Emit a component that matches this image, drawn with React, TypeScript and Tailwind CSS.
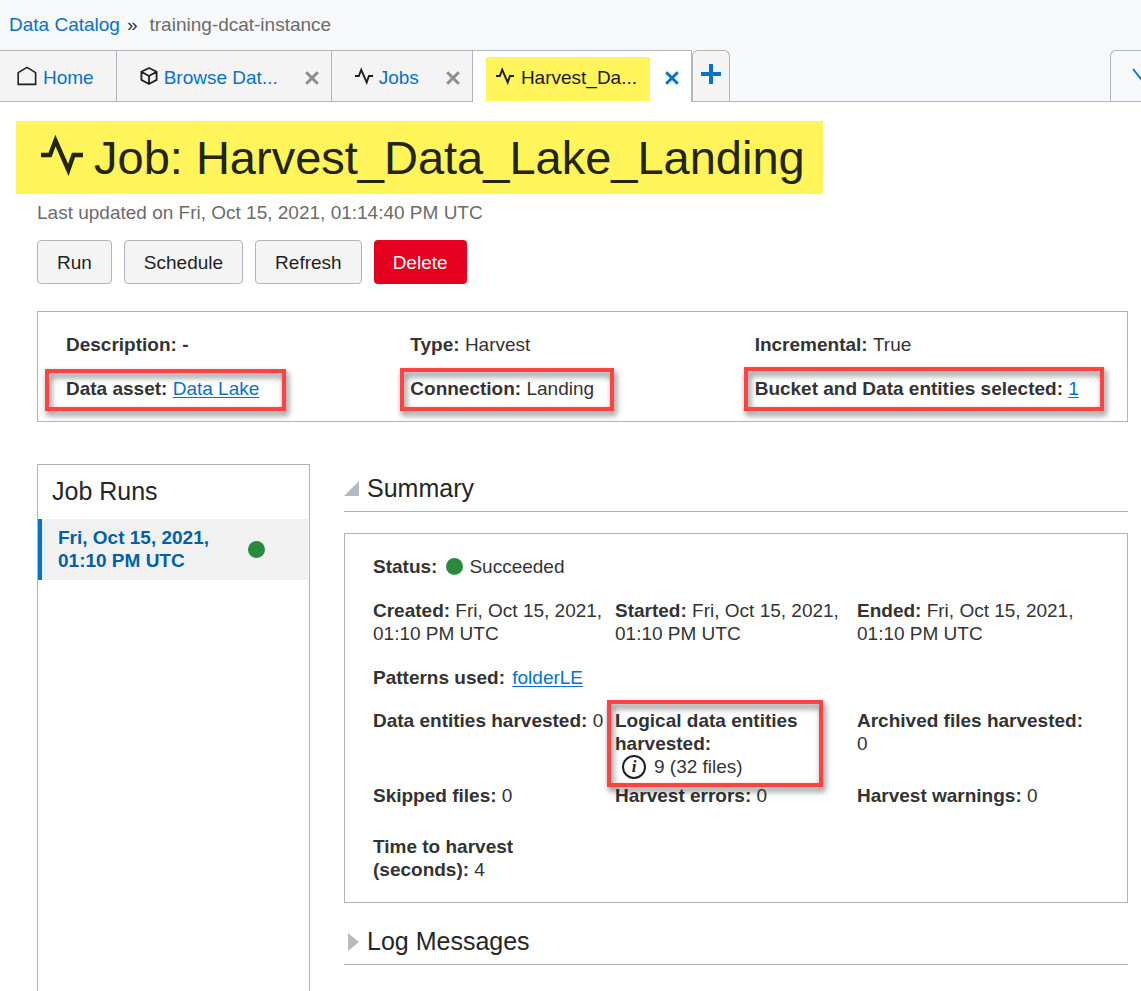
import type { ReactNode } from "react";

function PulseIcon({ className }: { className: string }) {
  return (
    <svg viewBox="0 0 42 42" className={className} fill="none" stroke="currentColor" strokeWidth="4.4" strokeMiterlimit="10" aria-hidden="true">
      <path d="M0 21H9L14.5 6.5L27.3 36L32.5 21H42" />
    </svg>
  );
}

function HomeIcon() {
  return (
    <svg viewBox="0 0 20 20" className="size-5 shrink-0 text-[#1f1f1f]" fill="none" stroke="currentColor" strokeWidth="1.6" aria-hidden="true">
      <path d="M1.2 18.4V6.6L10 1.4L18.6 6.6V18.4Z" />
    </svg>
  );
}

function CubeIcon() {
  return (
    <svg viewBox="0 0 18 18" className="size-[18px] shrink-0 text-[#1f1f1f]" fill="none" stroke="currentColor" strokeWidth="1.8" strokeLinejoin="round" aria-hidden="true">
      <path d="M9 1L16.6 4.8V12.9L9 17L1.4 12.9V4.8Z M1.4 4.8L9 9L16.6 4.8 M9 9V17" />
    </svg>
  );
}

function CloseButton({ label, className }: { label: string; className: string }) {
  return (
    <button type="button" aria-label={label} className={className}>
      <svg viewBox="0 0 14 14" className="size-[14px]" fill="none" stroke="currentColor" strokeWidth="3" aria-hidden="true">
        <path d="M1.2 1.2L12.8 12.8M12.8 1.2L1.2 12.8" />
      </svg>
    </button>
  );
}

function Tab({ icon, label, closable }: { icon: ReactNode; label: string; closable?: boolean }) {
  return (
    <div
      className={
        closable
          ? "flex items-center border-t border-r border-[#aeb5bf] bg-[#f4f4f4] pr-3 pl-[23px]"
          : "flex items-center border-t border-r border-[#aeb5bf] bg-[#f4f4f4] pr-[22px] pl-[17px]"
      }
    >
      <a href="#" className="flex items-center gap-[6px] text-[#0572ce]">
        {icon}
        <span className="pt-[2px]">{label}</span>
      </a>
      {closable && <CloseButton label={`Close ${label}`} className="mt-[3px] ml-[27px] text-[#8b8f94]" />}
    </div>
  );
}

function Highlight({ className }: { className: string }) {
  return (
    <span
      aria-hidden="true"
      className={`pointer-events-none absolute border-4 border-[#ff4343] drop-shadow-[2px_4px_3px_rgba(0,0,0,0.55)] ${className}`}
    />
  );
}

function Field({ label, children }: { label: string; children?: ReactNode }) {
  return (
    <div className="pr-2">
      <dt className="inline font-bold">{label}:</dt> <dd className="inline">{children}</dd>
    </div>
  );
}

function StatusDot() {
  return <span className="inline-block size-[17px] shrink-0 rounded-full bg-[#298a3c]" />;
}

const plainButton = "h-11 rounded border border-[#aeb5bf] bg-[#f4f4f4] px-[19px] text-[#1f1f1f]";
const link = "text-[#0572ce] underline underline-offset-2";

export default function App() {
  return (
    <div className="flex min-h-screen flex-col bg-white font-['Liberation_Sans',Arial,sans-serif] text-[19px] leading-[23px] text-[#333333]">
      <header className="bg-[#f7f8fa]">
        <nav aria-label="Breadcrumb" className="flex h-[50px] items-center pb-[2px] pl-[9px]">
          <a href="#" className="text-[#0572ce]">Data Catalog</a>
          <span className="ml-[7px]">»</span>
          <span className="ml-3 text-[#6b6b6b]">training-dcat-instance</span>
        </nav>
        <div className="flex h-[52px] border-b border-[#aeb5bf]">
          <Tab icon={<HomeIcon />} label="Home" />
          <Tab icon={<CubeIcon />} label="Browse Dat..." closable />
          <Tab icon={<PulseIcon className="size-[18px] shrink-0 text-[#1f1f1f]" />} label="Jobs" closable />
          <div className="-mb-px flex items-end border-t border-r border-[#aeb5bf] bg-white pr-3 pl-[13px]">
            <a href="#" aria-current="page" className="mb-px flex h-11 items-center gap-[7px] bg-[#fff55a] px-[10px] text-[#1a1a0a]">
              <PulseIcon className="mb-[6px] size-[18px] shrink-0" />
              <span className="pr-[3px] pb-[3px]">Harvest_Da...</span>
            </a>
            <CloseButton label="Close Harvest_Da..." className="mb-[17px] ml-[15px] text-[#0572ce]" />
          </div>
          <button type="button" aria-label="New tab" className="flex w-[38px] items-center justify-center rounded-t-md border border-b-0 border-[#aeb5bf] bg-[#f4f4f4] pb-1 text-[#0572ce]">
            <svg viewBox="0 0 20 20" className="size-5" fill="none" stroke="currentColor" strokeWidth="4" aria-hidden="true">
              <path d="M10 0V20M0 10H20" />
            </svg>
          </button>
          <button type="button" aria-label="More tabs" className="ml-auto flex w-[31px] items-center overflow-hidden rounded-tl-md border-t border-l border-[#aeb5bf] pb-[2px] pl-[21px] text-[#0572ce]">
            <svg viewBox="0 0 18 14" className="h-[14px] w-[18px] shrink-0" fill="none" stroke="currentColor" strokeWidth="1.8" aria-hidden="true">
              <path d="M1 1L9 11L17 1" />
            </svg>
          </button>
        </div>
      </header>

      <main className="flex grow flex-col pr-[13px] pl-[37px]">
        <h1 className="mt-[19px] -ml-[21px] flex h-[73px] items-center gap-[11px] self-start bg-[#fff55a] pr-[18px] pl-[25px] text-[47px] leading-[73px] text-[#24240f]">
          <PulseIcon className="mb-[6px] size-[42px] shrink-0" />
          <span>Job: Harvest_Data_Lake_Landing</span>
        </h1>
        <p className="mt-[7px] text-[#6b6b6b]">Last updated on Fri, Oct 15, 2021, 01:14:40 PM UTC</p>
        <div className="mt-4 flex gap-3">
          <button type="button" className={plainButton}>Run</button>
          <button type="button" className={plainButton}>Schedule</button>
          <button type="button" className={plainButton}>Refresh</button>
          <button type="button" className="h-11 rounded bg-[#e6001f] px-[19px] text-white">Delete</button>
        </div>

        <dl className="mt-[27px] grid grid-cols-3 gap-y-5 border border-[#aeb5bf] px-7 pt-[21px] pb-5 leading-6">
          <Field label="Description"><b>-</b></Field>
          <Field label="Type">Harvest</Field>
          <Field label="Incremental">True</Field>
          <div className="relative justify-self-start">
            <Field label="Data asset"><a href="#" className={link}>Data Lake</a></Field>
            <Highlight className="-top-2 -right-[19px] -bottom-[10px] -left-[21px]" />
          </div>
          <div className="relative justify-self-start">
            <Field label="Connection">Landing</Field>
            <Highlight className="-top-[9px] -right-[12px] -bottom-[10px] -left-[10px]" />
          </div>
          <div className="relative justify-self-start">
            <Field label="Bucket and Data entities selected"><a href="#" className={link}>1</a></Field>
            <Highlight className="-top-[10px] -right-[17px] -bottom-[10px] -left-[11px]" />
          </div>
        </dl>

        <div className="mt-[42px] flex grow gap-[34px]">
          <aside className="w-[273px] shrink-0 border border-b-0 border-[#aeb5bf]">
            <h2 className="px-[14px] pt-[11px] pb-[13px] text-[25px] leading-[30px] text-[#262626]">Job Runs</h2>
            <a href="#" className="mr-px flex items-center border-l-4 border-[#0572ce] bg-[#f1f1f1] pt-[7px] pb-2 pl-4 font-bold text-[#0061a6]">
              <span className="w-[190px]">Fri, Oct 15, 2021, 01:10 PM UTC</span>
              <StatusDot />
            </a>
          </aside>

          <div className="min-w-0 grow">
            <section>
              <h2 className="border-b border-[#aeb5bf] pt-[10px] pb-2 text-[25px] leading-[29px] text-[#262626]">
                <button type="button" aria-expanded="true" className="flex items-center gap-2">
                  <svg viewBox="0 0 15 15" className="size-[15px]" fill="#b4bac4" aria-hidden="true">
                    <path d="M15 0V15H0Z" />
                  </svg>
                  Summary
                </button>
              </h2>
              <dl className="mt-[21px] border border-[#aeb5bf] px-7 py-[21px]">
                <div className="flex items-center">
                  <dt className="font-bold">Status:</dt>
                  <dd className="ml-[9px] flex items-center gap-[6px]"><StatusDot />Succeeded</dd>
                </div>
                <div className="mt-[21px] grid grid-cols-3">
                  <Field label="Created">Fri, Oct 15, 2021, 01:10 PM UTC</Field>
                  <Field label="Started">Fri, Oct 15, 2021, 01:10 PM UTC</Field>
                  <Field label="Ended">Fri, Oct 15, 2021, 01:10 PM UTC</Field>
                </div>
                <div className="mt-[21px]">
                  <Field label="Patterns used"><a href="#" className={`ml-[2px] ${link}`}>folderLE</a></Field>
                </div>
                <div className="mt-5 grid grid-cols-3">
                  <Field label="Data entities harvested">0</Field>
                  <div className="relative">
                    <dt className="pr-8 font-bold">Logical data entities harvested:</dt>
                    <dd className="flex h-[23px] items-center gap-2 pl-[7px]">
                      <span className="flex size-6 items-center justify-center rounded-full border-2 border-[#1f1f1f] font-['Liberation_Serif',serif] text-[17px] font-bold text-[#1f1f1f] italic">i</span>
                      9 (32 files)
                    </dd>
                    <Highlight className="-top-[9px] right-[34px] -bottom-[9px] -left-2" />
                  </div>
                  <div className="pr-2">
                    <Field label="Archived files harvested">0</Field>
                  </div>
                </div>
                <div className="mt-[6px] grid grid-cols-3">
                  <Field label="Skipped files">0</Field>
                  <Field label="Harvest errors">0</Field>
                  <Field label="Harvest warnings">0</Field>
                </div>
                <div className="mt-7 grid grid-cols-3">
                  <div className="pr-16">
                    <Field label="Time to harvest (seconds)">4</Field>
                  </div>
                </div>
              </dl>
            </section>
            <section className="mt-6">
              <h2 className="border-b border-[#aeb5bf] pb-2 text-[25px] leading-[29px] text-[#262626]">
                <button type="button" aria-expanded="false" className="flex items-center gap-2 pl-1">
                  <svg viewBox="0 0 11 18" className="h-[18px] w-[11px]" fill="#b4bac4" aria-hidden="true">
                    <path d="M0 0L11 9L0 18Z" />
                  </svg>
                  Log Messages
                </button>
              </h2>
            </section>
          </div>
        </div>
      </main>
    </div>
  );
}
